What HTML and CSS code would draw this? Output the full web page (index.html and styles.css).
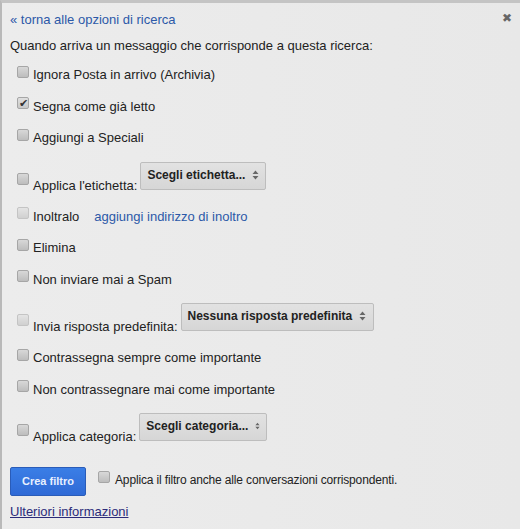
FILE: index.html
```html
<!DOCTYPE html>
<html>
<head>
<meta charset="utf-8">
<link rel="stylesheet" href="styles.css">
</head>
<body>
<div class="panel">
  <div class="top">
    <a class="link back">« torna alle opzioni di ricerca</a>
    <span class="close">✖</span>
  </div>
  <div class="intro">Quando arriva un messaggio che corrisponde a questa ricerca:</div>
  <div class="options">
    <div class="row"><span class="cb"></span><span>Ignora Posta in arrivo (Archivia)</span></div>
    <div class="row"><span class="cb checked">✔</span><span>Segna come già letto</span></div>
    <div class="row"><span class="cb"></span><span>Aggiungi a Speciali</span></div>
    <div class="row tall"><span class="cb"></span><span>Applica l'etichetta:</span><span class="sel sel1">Scegli etichetta...<svg class="arr" width="7" height="10" viewBox="0 0 7 10"><path d="M0.5 4 L3.5 0.5 L6.5 4 Z M0.5 6 L3.5 9.5 L6.5 6 Z" fill="#666"/></svg></span></div>
    <div class="row"><span class="cb light"></span><span>Inoltralo</span><a class="link fwd">aggiungi indirizzo di inoltro</a></div>
    <div class="row"><span class="cb"></span><span>Elimina</span></div>
    <div class="row"><span class="cb"></span><span>Non inviare mai a Spam</span></div>
    <div class="row tall"><span class="cb light"></span><span>Invia risposta predefinita:</span><span class="sel sel2">Nessuna risposta predefinita<svg class="arr" width="7" height="10" viewBox="0 0 7 10"><path d="M0.5 4 L3.5 0.5 L6.5 4 Z M0.5 6 L3.5 9.5 L6.5 6 Z" fill="#666"/></svg></span></div>
    <div class="row"><span class="cb"></span><span>Contrassegna sempre come importante</span></div>
    <div class="row"><span class="cb"></span><span>Non contrassegnare mai come importante</span></div>
    <div class="row tall"><span class="cb"></span><span>Applica categoria:</span><span class="sel sel3">Scegli categoria...<svg class="arr" width="7" height="10" viewBox="0 0 7 10"><path d="M0.5 4 L3.5 0.5 L6.5 4 Z M0.5 6 L3.5 9.5 L6.5 6 Z" fill="#666"/></svg></span></div>
  </div>
  <div class="actions">
    <span class="btn">Crea filtro</span>
    <span class="cb small"></span>
    <span class="also">Applica il filtro anche alle conversazioni corrispondenti.</span>
  </div>
  <a class="more">Ulteriori informazioni</a>
</div>
</body>
</html>
```

FILE: styles.css
```css
html, body {
  margin: 0;
  padding: 0;
}
body {
  width: 520px;
  height: 529px;
  overflow: hidden;
  background: #ebebeb;
  font-family: "Liberation Sans", Arial, sans-serif;
  font-size: 13px;
  color: #222;
}
.panel {
  box-sizing: border-box;
  height: 529px;
  border-top: 3px solid #c4c4c4;
  border-left: 2px solid #b9b9b9;
  background: linear-gradient(90deg, #ececec, #e8e8e8);
  padding: 0 0 0 8px;
}
.top {
  display: flex;
  justify-content: space-between;
  align-items: center;
  height: 31px;
}
.link {
  color: #2c59a8;
}
.back {
  margin-top: 1px;
}
.close {
  font-size: 12px;
  color: #666;
  margin-right: 8px;
  margin-top: -2px;
}
.intro {
  height: 25px;
  line-height: 24px;
}
.options {
  padding-left: 7px;
}
.row {
  display: flex;
  align-items: center;
  height: 31.5px;
}
.row.tall {
  height: 47px;
  align-items: flex-end;
  padding-bottom: 8px;
  box-sizing: border-box;
}
.cb {
  box-sizing: border-box;
  width: 12px;
  height: 12px;
  border: 1px solid #a6a6a6;
  border-radius: 2px;
  background: linear-gradient(#d8d8d8, #bdbdbd);
  margin-right: 4px;
  margin-top: -6px;
  display: inline-flex;
  align-items: center;
  justify-content: center;
  font-size: 11px;
  line-height: 1;
  color: #333;
  flex: none;
}
.row.tall .cb {
  margin-bottom: 8px;
}
.cb.checked {
  background: linear-gradient(#e0e0e0, #c8c8c8);
}
.cb.light {
  background: linear-gradient(#e4e4e4, #d0d0d0);
  border-color: #c4c4c4;
}
.fwd {
  margin-left: 15px;
}
.sel {
  box-sizing: border-box;
  display: inline-flex;
  align-items: flex-start;
  height: 28px;
  padding: 5px 6px 0 6px;
  margin-left: 3px;
  margin-bottom: 3px;
  border: 1px solid #bdbdbd;
  border-radius: 2px;
  background: linear-gradient(#e2e2e2, #d6d6d6);
  font-size: 12px;
  font-weight: bold;
  color: #222;
  align-self: flex-end;
  white-space: nowrap;
}
.arr {
  margin-left: 7px;
  margin-top: 2px;
}
.sel1 { width: 126px; }
.sel2 { width: 193px; }
.sel3 { width: 128px; }
.actions {
  display: flex;
  align-items: center;
  margin-top: 15px;
  height: 28px;
}
.btn {
  box-sizing: border-box;
  width: 76px;
  height: 29px;
  display: inline-flex;
  align-items: center;
  justify-content: center;
  background: linear-gradient(#3a7ee6, #2f6ad6);
  border: 1px solid #2a5cb8;
  border-radius: 2px;
  color: #e8f0ff;
  font-weight: bold;
  font-size: 11px;
}
.cb.small {
  margin-left: 12px;
  margin-right: 5px;
  margin-top: -8px;
}
.also {
  font-size: 12px;
  margin-top: -2px;
  letter-spacing: -0.15px;
}
.more {
  display: block;
  margin-top: 9px;
  color: #2b2b7a;
  text-decoration: underline;
  font-size: 13px;
}
```
